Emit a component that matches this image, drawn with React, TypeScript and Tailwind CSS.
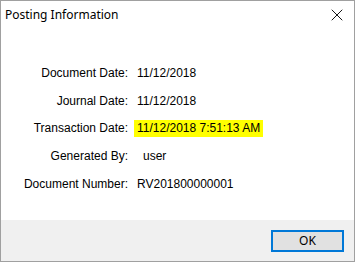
import { X } from "lucide-react";

const rows: { label: string; value: string; highlight?: boolean; indent?: boolean }[] = [
  { label: "Document Date:", value: "11/12/2018" },
  { label: "Journal Date:", value: "11/12/2018" },
  { label: "Transaction Date:", value: "11/12/2018 7:51:13 AM", highlight: true },
  { label: "Generated By:", value: "user", indent: true },
  { label: "Document Number:", value: "RV201800000001" },
];

export default function App() {
  return (
    <div className="w-[356px] h-[263px] bg-white">
      <div className="flex flex-col w-[355px] h-[262px] border border-[#a0a0a0] bg-white">
        {/* Title bar */}
        <div className="flex items-center justify-between h-[28px] pl-[4px] pr-[7px] shrink-0">
          <span className="text-[12px] text-black" style={{ fontFamily: '"Noto Sans", "Open Sans", sans-serif' }}>
            Posting Information
          </span>
          <X className="w-[20px] h-[20px] text-black" strokeWidth={1.1} />
        </div>

        {/* Body */}
        <div
          className="flex-1 flex flex-col pt-[30px] text-[12px] text-black"
          style={{ fontFamily: '"Liberation Sans", Arial, sans-serif' }}
        >
          {rows.map((row) => (
            <div key={row.label} className="flex items-center h-[27.75px]">
              <span className="w-[127px] text-right shrink-0">{row.label}</span>
              {row.highlight ? (
                <span className="ml-[6px] w-[129px] h-[17px] flex items-center pl-[3px] bg-[#ffff00]">
                  {row.value}
                </span>
              ) : (
                <span className={row.indent ? "ml-[15px]" : "ml-[9px]"}>{row.value}</span>
              )}
            </div>
          ))}
        </div>

        {/* Footer */}
        <div className="h-[41px] shrink-0 bg-[#f0f0f0] flex items-center justify-end pr-[10px]">
          <button
            className="w-[73px] h-[22px] border-2 border-[#0078d7] bg-[#e1e1e1] text-[12px] text-black flex items-center justify-center"
            style={{ fontFamily: '"Noto Sans", "Open Sans", sans-serif' }}
          >
            OK
          </button>
        </div>
      </div>
    </div>
  );
}
